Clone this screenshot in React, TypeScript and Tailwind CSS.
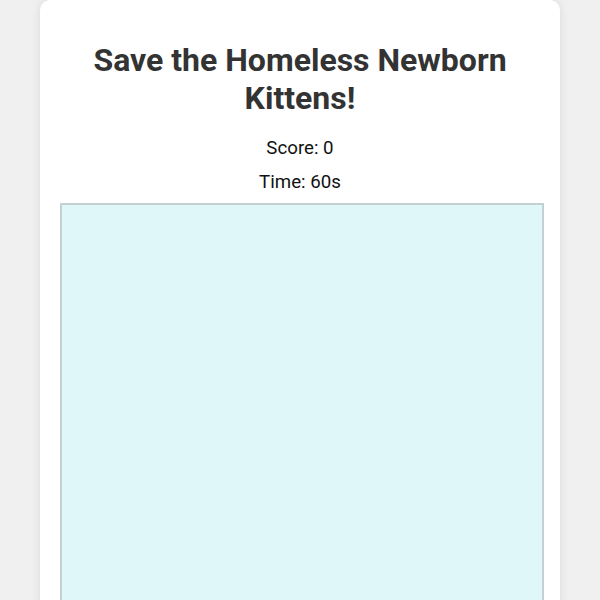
export default function App() {
  return (
    <div className="min-h-[600px] bg-[#f0f0f0] font-['Roboto',sans-serif]">
      <div className="mx-auto w-[520px] rounded-[10px] bg-white px-[20px] pb-[20px] pt-[41px] shadow-[0_0_10px_rgba(0,0,0,0.1)]">
        <h1 className="text-center text-[32px] font-bold leading-[38px] text-[#333]">
          Save the Homeless Newborn Kittens!
        </h1>
        <div className="mt-[20px] text-center text-[18.7px] leading-[22px] text-[#111]">Score: 0</div>
        <div className="mt-[12px] text-center text-[18.7px] leading-[22px] text-[#111]">Time: 60s</div>
        <div className="mt-[10px] h-[480px] w-[484px] border-2 border-[#c5d0d4] bg-[#e0f7fa]" />
      </div>
    </div>
  );
}
